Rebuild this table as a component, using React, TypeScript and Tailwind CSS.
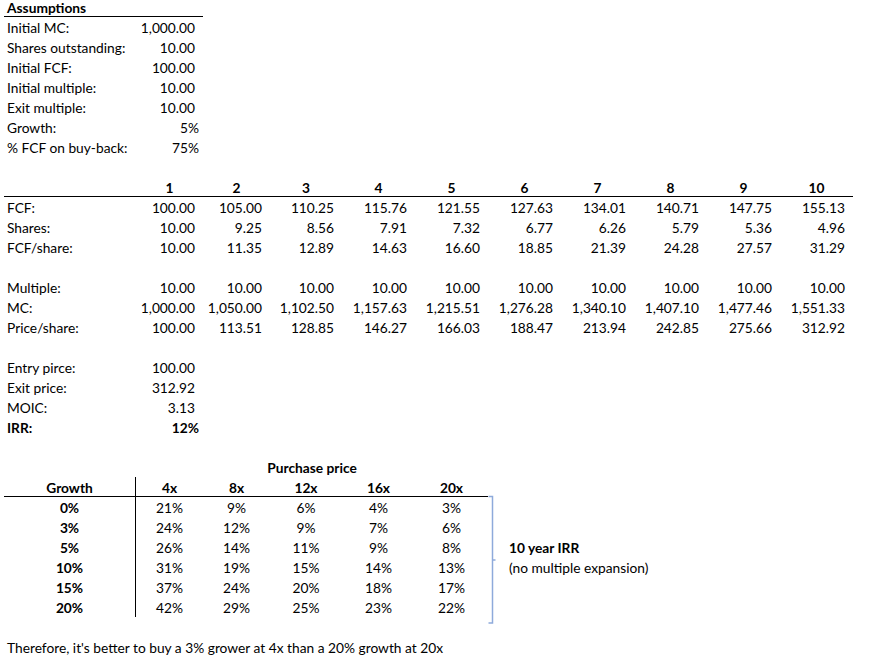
import React from "react";

const W = ["w-[132px]", "w-[67px]", "w-[67px]", "w-[72px]", "w-[73px]", "w-[73px]", "w-[73px]", "w-[73px]", "w-[73px]", "w-[73px]", "w-[73px]"];

type CellSpec = {
  t?: string;
  align?: "l" | "r" | "c" | "p";
  bold?: boolean;
  cls?: string;
};

function Row({ cells, cls = "" }: { cells: CellSpec[]; cls?: string }) {
  return (
    <div className={"flex h-[20px] " + cls}>
      {cells.map((c, i) => {
        const a = c.align ?? (i === 0 ? "l" : "r");
        const al =
          a === "l" ? "text-left pl-[3px]" : a === "c" ? "text-center" : a === "p" ? "text-right pr-[4px]" : "text-right pr-[8px]";
        return (
          <div
            key={i}
            className={`${W[i]} shrink-0 whitespace-nowrap leading-[20px] pt-[1px] ${al} ${c.bold ? "font-bold" : ""} ${c.cls ?? ""}`}
          >
            {c.t ?? "\u00a0"}
          </div>
        );
      })}
    </div>
  );
}

const top: [string, string[]][] = [
  ["FCF:", ["100.00", "105.00", "110.25", "115.76", "121.55", "127.63", "134.01", "140.71", "147.75", "155.13"]],
  ["Shares:", ["10.00", "9.25", "8.56", "7.91", "7.32", "6.77", "6.26", "5.79", "5.36", "4.96"]],
  ["FCF/share:", ["10.00", "11.35", "12.89", "14.63", "16.60", "18.85", "21.39", "24.28", "27.57", "31.29"]],
];
const mid: [string, string[]][] = [
  ["Multiple:", ["10.00", "10.00", "10.00", "10.00", "10.00", "10.00", "10.00", "10.00", "10.00", "10.00"]],
  ["MC:", ["1,000.00", "1,050.00", "1,102.50", "1,157.63", "1,215.51", "1,276.28", "1,340.10", "1,407.10", "1,477.46", "1,551.33"]],
  ["Price/share:", ["100.00", "113.51", "128.85", "146.27", "166.03", "188.47", "213.94", "242.85", "275.66", "312.92"]],
];
const sens: [string, string[]][] = [
  ["0%", ["21%", "9%", "6%", "4%", "3%"]],
  ["3%", ["24%", "12%", "9%", "7%", "6%"]],
  ["5%", ["26%", "14%", "11%", "9%", "8%"]],
  ["10%", ["31%", "19%", "15%", "14%", "13%"]],
  ["15%", ["37%", "24%", "20%", "18%", "17%"]],
  ["20%", ["42%", "29%", "25%", "23%", "22%"]],
];

const blank = () => <div className="h-[20px]" />;

export default function App() {
  return (
    <div className="relative w-[879px] h-[667px] overflow-hidden bg-white text-black font-['Lato',sans-serif] text-[13.75px]">
      <div className="-mt-[3px] pl-[4px]">
        <Row cells={[{ t: "Assumptions", bold: true, cls: "border-b border-black" }, { cls: "border-b border-black" }]} />
        <Row cells={[{ t: "Initial MC:" }, { t: "1,000.00" }]} />
        <Row cells={[{ t: "Shares outstanding:" }, { t: "10.00" }]} />
        <Row cells={[{ t: "Initial FCF:" }, { t: "100.00" }]} />
        <Row cells={[{ t: "Initial multiple:" }, { t: "10.00" }]} />
        <Row cells={[{ t: "Exit multiple:" }, { t: "10.00" }]} />
        <Row cells={[{ t: "Growth:" }, { t: "5%", align: "p" }]} />
        <Row cells={[{ t: "% FCF on buy-back:" }, { t: "75%", align: "p" }]} />
        {blank()}
        <Row
          cells={[{ cls: "border-b border-black" }, ...["1", "2", "3", "4", "5", "6", "7", "8", "9", "10"].map((n) => ({ t: n, bold: true, align: "c" as const, cls: "border-b border-black" }))]}
        />
        {top.map(([l, v]) => (
          <Row key={l} cells={[{ t: l }, ...v.map((x) => ({ t: x }))]} />
        ))}
        {blank()}
        {mid.map(([l, v]) => (
          <Row key={l} cells={[{ t: l }, ...v.map((x) => ({ t: x }))]} />
        ))}
        {blank()}
        <Row cells={[{ t: "Entry pirce:" }, { t: "100.00" }]} />
        <Row cells={[{ t: "Exit price:" }, { t: "312.92" }]} />
        <Row cells={[{ t: "MOIC:" }, { t: "3.13" }]} />
        <Row cells={[{ t: "IRR:", bold: true }, { t: "12%", align: "p", bold: true }]} />
        {blank()}
        <div className="flex h-[20px]">
          <div className="w-[132px] shrink-0" />
          <div className="w-[352px] shrink-0 text-center font-bold leading-[20px] pt-[1px]">Purchase price</div>
        </div>
        <Row
          cells={[
            { t: "Growth", bold: true, align: "c", cls: "border-b border-r border-black" },
            ...["4x", "8x", "12x", "16x", "20x"].map((x) => ({ t: x, bold: true, align: "c" as const, cls: "border-b border-black" })),
          ]}
        />
        {sens.map(([g, v], ri) => (
          <div key={g} className="flex h-[20px]">
            <Row cells={[{ t: g, bold: true, align: "c", cls: "border-r border-black" }, ...v.map((x) => ({ t: x, align: "c" as const }))]} />
            {ri === 2 && <div className="pl-[21px] leading-[20px] pt-[1px] font-bold whitespace-nowrap">10 year IRR</div>}
            {ri === 3 && <div className="pl-[21px] leading-[20px] pt-[1px] whitespace-nowrap">(no multiple expansion)</div>}
          </div>
        ))}
        {blank()}
        <Row cells={[{ t: "Therefore, it's better to buy a 3% grower at 4x than a 20% growth at 20x" }]} />
      </div>
      <svg className="absolute left-[484px] top-[492px]" width="14" height="136" viewBox="0 0 14 136">
        <path d="M4.5 4.5 H8.5 V131 H4.5 M8.5 68 H11.5" fill="none" stroke="#8eaadb" strokeWidth="1.5" />
      </svg>
    </div>
  );
}
